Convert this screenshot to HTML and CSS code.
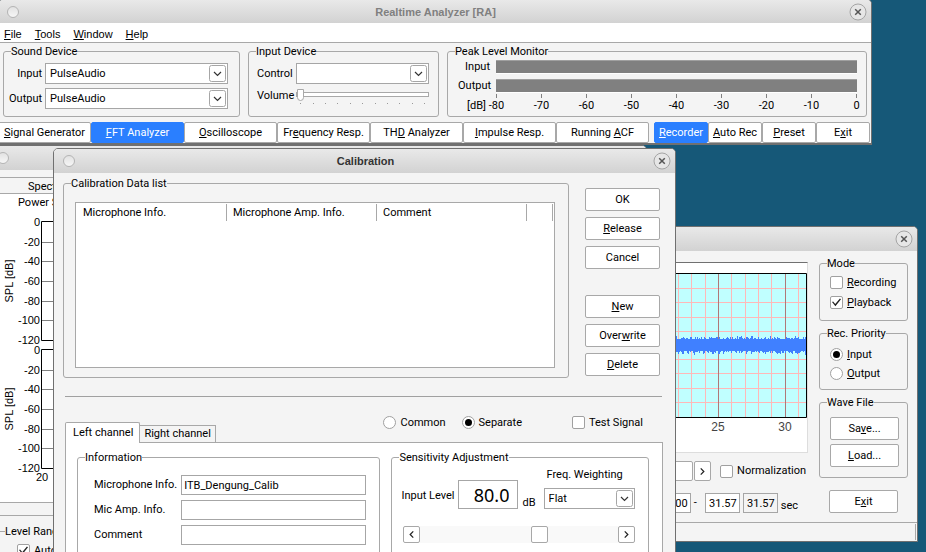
FILE: index.html
```html
<!DOCTYPE html>
<html lang="en">
<head>
<meta charset="utf-8">
<title>Realtime Analyzer</title>
<link rel="stylesheet" href="styles.css">
</head>
<body>
<svg class="icons">
  <symbol id="close" viewBox="0 0 18 18"><circle cx="9" cy="9" r="8" fill="#e6e6e6" stroke="#a4a4a4"/><path d="M6.200 6.200l5.600 5.600M11.800 6.200l-5.600 5.600" stroke="#555" stroke-width="1.500"/></symbol>
  <symbol id="down" viewBox="0 0 17 17"><rect x=".5" y=".5" width="16" height="16" rx="2" fill="#fff" stroke="#a6a6a6"/><path d="M5 7l3.500 3.500L12 7" fill="none" stroke="#333" stroke-width="1.200"/></symbol>
  <symbol id="left" viewBox="0 0 17 17"><path d="M10.500 5L7 8.500l3.500 3.500" fill="none" stroke="#222" stroke-width="1.400"/></symbol>
  <symbol id="right" viewBox="0 0 17 17"><path d="M6.500 5L10 8.500 6.500 12" fill="none" stroke="#222" stroke-width="1.400"/></symbol>
</svg>
<main class="desktop">

  <section class="window spectrum">
    <header class="titlebar"><span class="orb"></span></header>
    <div class="spectrum-tab">Spectrum</div>
    <div class="spectrum-view">
      <div class="spectrum-title">Power Spectrum</div>
      <svg class="spectrum-plot" width="120" height="280" viewBox="0 0 120 280">
        <g stroke="#808080"><path d="M51 32.500h60M51 51.500h60M51 71.500h60M51 91.500h60M51 110.500h60M51 160.500h60M51 179.500h60M51 199.500h60M51 219.500h60M51 238.500h60"/></g>
        <path d="M111 11.500H51.500v119H111M111 139.500H51.500v119H111" fill="none" stroke="#000"/>
        <g text-anchor="end">
          <text x="50" y="16">0</text><text x="50" y="36">-20</text><text x="50" y="55">-40</text><text x="50" y="75">-60</text><text x="50" y="95">-80</text><text x="50" y="114">-100</text><text x="50" y="134">-120</text>
          <text x="50" y="144">0</text><text x="50" y="164">-20</text><text x="50" y="183">-40</text><text x="50" y="203">-60</text><text x="50" y="223">-80</text><text x="50" y="242">-100</text><text x="50" y="262">-120</text>
        </g>
        <g text-anchor="middle">
          <text x="52" y="271">20</text>
          <text transform="translate(23 71) rotate(-90)">SPL [dB]</text>
          <text transform="translate(23 199) rotate(-90)">SPL [dB]</text>
        </g>
      </svg>
    </div>
    <div class="spectrum-foot">
      <fieldset><legend>Level Range</legend>
        <label class="option"><input type="checkbox" checked>Auto</label>
      </fieldset>
    </div>
  </section>

  <section class="window analyzer">
    <header class="titlebar inactive"><span class="orb"></span><h1>Realtime Analyzer [RA]</h1><button class="close" aria-label="Close"><svg><use href="#close"/></svg></button></header>
    <nav class="menu"><a href="#"><u>F</u>ile</a><a href="#"><u>T</u>ools</a><a href="#"><u>W</u>indow</a><a href="#"><u>H</u>elp</a></nav>
    <div class="devices">
      <fieldset class="sound"><legend>Sound Device</legend>
        <label for="snd-in">Input</label>
        <span class="select"><select id="snd-in"><option>PulseAudio</option></select><svg><use href="#down"/></svg></span>
        <label for="snd-out">Output</label>
        <span class="select"><select id="snd-out"><option>PulseAudio</option></select><svg><use href="#down"/></svg></span>
      </fieldset>
      <fieldset class="control"><legend>Input Device</legend>
        <label for="ctl">Control</label>
        <span class="select"><select id="ctl"><option></option></select><svg><use href="#down"/></svg></span>
        <label for="vol">Volume</label>
        <span class="volume"><input id="vol" type="range" value="0"><span class="dots"><i></i><i></i><i></i><i></i><i></i><i></i><i></i><i></i><i></i><i></i><i></i></span></span>
      </fieldset>
      <fieldset class="peak"><legend>Peak Level Monitor</legend>
        <span>Input</span><div class="bar"></div>
        <span>Output</span><div class="bar"></div>
        <span class="unit">[dB]</span>
        <div class="scale"><span>-80</span><span>-70</span><span>-60</span><span>-50</span><span>-40</span><span>-30</span><span>-20</span><span>-10</span><span>0</span></div>
      </fieldset>
    </div>
    <div class="toolbar">
      <div class="tools"><button><u>S</u>ignal Generator</button><button class="on"><u>F</u>FT Analyzer</button><button><u>O</u>scilloscope</button><button>Fr<u>e</u>quency Resp.</button><button>TH<u>D</u> Analyzer</button><button><u>I</u>mpulse Resp.</button><button>Running <u>A</u>CF</button></div>
      <div class="tools short"><button class="on"><u>R</u>ecorder</button><button><u>A</u>uto Rec</button><button><u>P</u>reset</button><button>E<u>x</u>it</button></div>
    </div>
  </section>

  <section class="window recorder">
    <header class="titlebar inactive"><span class="orb"></span><button class="close" aria-label="Close"><svg><use href="#close"/></svg></button></header>
    <div class="recorder-body">
      <div class="recorder-main">
        <div class="wave-panel">
          <svg width="297" height="189" viewBox="0 0 297 189">
            <rect x="20" y="10" width="276" height="145" fill="#c0ffff"/>
            <path d="M20 25.500h276M20 39.500h276M20 54.500h276M20 68.500h276M20 96.500h276M20 110.500h276M20 125.500h276M20 139.500h276M168.500 10v145M181.500 10v145M195.500 10v145M221.500 10v145M235.500 10v145M248.500 10v145M261.500 10v145M288.500 10v145" stroke="#ffb8b8" fill="none"/>
            <path d="M208.500 10v145M275.500 10v145" stroke="#b07878"/>
            <path id="wave" stroke="#4080ff" fill="none"/>
            <path d="M20 10.500h276.500v144H20" fill="none" stroke="#000"/>
            <g fill="#444" text-anchor="middle"><text x="208" y="168">25</text><text x="275" y="168">30</text></g>
          </svg>
        </div>
        <div class="seek">
          <button class="seek-thumb" aria-label="Position"></button><button class="step" aria-label="Next"><svg><use href="#right"/></svg></button>
          <label class="option"><input type="checkbox">Normalization</label>
        </div>
        <div class="range"><input aria-label="Start" value="0.00"><span>-</span><input aria-label="End" value="31.57"><input class="readonly" aria-label="Length" value="31.57" readonly><span class="sec">sec</span></div>
      </div>
      <div class="recorder-side">
        <fieldset class="mode"><legend>Mode</legend>
          <label class="option"><input type="checkbox"><span><u>R</u>ecording</span></label>
          <label class="option"><input type="checkbox" checked><span><u>P</u>layback</span></label>
        </fieldset>
        <fieldset class="priority"><legend>Rec. Priority</legend>
          <label class="option"><input type="radio" name="prio" checked><span><u>I</u>nput</span></label>
          <label class="option"><input type="radio" name="prio"><span><u>O</u>utput</span></label>
        </fieldset>
        <fieldset class="files"><legend>Wave File</legend>
          <button class="push">Sa<u>v</u>e...</button><button class="push"><u>L</u>oad...</button>
        </fieldset>
        <button class="push exit">E<u>x</u>it</button>
      </div>
    </div>
    <footer class="status"><span></span></footer>
  </section>

  <section class="window calibration">
    <header class="titlebar"><span class="orb"></span><h2>Calibration</h2><button class="close" aria-label="Close"><svg><use href="#close"/></svg></button></header>
    <div class="calibration-top">
      <fieldset class="data-list"><legend>Calibration Data list</legend>
        <div class="list"><table><thead><tr><th>Microphone Info.</th><th>Microphone Amp. Info.</th><th>Comment</th><th class="spare"></th></tr></thead></table></div>
      </fieldset>
      <div class="actions">
        <button class="push">OK</button><button class="push"><u>R</u>elease</button><button class="push">Cancel</button>
        <button class="push second"><u>N</u>ew</button><button class="push">Over<u>w</u>rite</button><button class="push"><u>D</u>elete</button>
      </div>
    </div>
    <hr>
    <div class="tab-row">
      <div class="tabs"><button class="tab current">Left channel</button><button class="tab">Right channel</button></div>
      <div class="modes">
        <label class="option"><input type="radio" name="chan">Common</label>
        <label class="option"><input type="radio" name="chan" checked>Separate</label>
        <label class="option test"><input type="checkbox">Test Signal</label>
      </div>
    </div>
    <div class="tab-panel">
      <fieldset class="info"><legend>Information</legend>
        <label for="mic">Microphone Info.</label><input id="mic" value="ITB_Dengung_Calib">
        <label for="amp">Mic Amp. Info.</label><input id="amp">
        <label for="com">Comment</label><input id="com">
      </fieldset>
      <fieldset class="sensitivity"><legend>Sensitivity Adjustment</legend>
        <div class="level">
          <label for="lvl">Input Level</label><input id="lvl" value="80.0"><span class="db">dB</span>
          <div class="weighting"><label for="fw">Freq. Weighting</label>
            <span class="select"><select id="fw"><option>Flat</option></select><svg><use href="#down"/></svg></span></div>
        </div>
        <div class="scroller"><button aria-label="Lower"><svg><use href="#left"/></svg></button><input type="range" min="0" max="1000" value="615" aria-label="Sensitivity"><button aria-label="Raise"><svg><use href="#right"/></svg></button></div>
      </fieldset>
    </div>
  </section>
</main>
<script src="wave.js"></script>
</body>
</html>
```
FILE: styles.css
```css
* { box-sizing: border-box; }
body { margin: 0; font: 11px/12px Roboto, "Liberation Sans", sans-serif; color: #000; }
button, input, select { font: inherit; color: inherit; margin: 0; padding: 0; border-radius: 0; }
u { text-underline-offset: 1px; }
svg text { font: 11px "Liberation Sans", sans-serif; }
.icons { display: none; }
.desktop { position: relative; height: 100vh; overflow: hidden; background: #165878; }

/* window frames */
.window { position: absolute; background: #f4f4f4; border: 1px solid #707070; border-radius: 5px 5px 0 0; overflow: hidden; }
.titlebar { display: flex; align-items: center; justify-content: space-between; height: 24px; padding: 0 4px 0 9px; background: linear-gradient(#e9e9e9, #d2d2d2); }
.titlebar h1, .titlebar h2 { margin: 0; padding-left: 3px; font: bold 11px/14px "Liberation Sans", sans-serif; color: #333; }
.titlebar.inactive h1 { color: #808080; }
.orb { width: 12px; height: 12px; border: 1px solid #b4b4b4; border-radius: 50%; background: linear-gradient(#e2e2e2, #f6f6f6); }
.close { width: 18px; height: 18px; border: 0; background: none; }
.close svg { display: block; width: 18px; height: 18px; }

/* shared controls */
fieldset { min-width: 0; margin: -1px 0 0; padding: 0 10px; border: 1px solid #a8a8a8; border-radius: 3px; }
legend { margin-left: -3px; padding: 2px 0 0; line-height: 12px; white-space: nowrap; }
.select { position: relative; display: block; }
.select select { display: block; width: 100%; height: 21px; padding: 0 22px 0 4px; border: 1px solid #a6a6a6; background: #fff; appearance: none; }
.select svg { position: absolute; top: 2px; right: 2px; width: 17px; height: 17px; pointer-events: none; }
.option { display: flex; align-items: center; gap: 4px; height: 13px; white-space: nowrap; }
.option input { flex: none; display: grid; place-items: center; width: 13px; height: 13px; border: 1px solid #a0a0a0; border-radius: 2px; background: #fff; appearance: none; }
.option input[type=radio] { border-radius: 50%; }
.option input[type=radio]:checked::after { content: ""; width: 7px; height: 7px; border-radius: 50%; background: #000; }
.option input[type=checkbox]:checked::after { content: ""; width: 9px; height: 9px; background: #222; clip-path: polygon(0 45%, 12% 38%, 36% 68%, 88% 5%, 100% 14%, 38% 92%); }
.push { width: 100%; height: 23px; border: 1px solid #a8a8a8; border-radius: 2px; background: #fff; }

/* main analyzer window */
.analyzer { left: -2px; top: -1px; width: 874px; border-bottom-width: 2px; }
.analyzer .titlebar { height: 23px; padding: 0 4px 0 8px; }
.menu { display: flex; gap: 13px; height: 20px; padding: 4px 5px 0; background: #fff; border-bottom: 1px solid #a8a8a8; font: 11px/14px "Liberation Sans", sans-serif; }
.menu a { color: inherit; text-decoration: none; }
.devices { display: flex; gap: 8px; padding: 2px 4px 5px; }
.devices fieldset { display: grid; align-content: start; align-items: center; }
.sound { flex: none; width: 237px; }
.devices .sound, .devices .control { grid-template-columns: auto 1fr; gap: 4px; padding: 5px 11px 7px 5px; }
.devices .sound { column-gap: 3px; }
.devices .sound label { text-align: right; }
.devices .sound legend, .devices .control legend { margin-left: 2px; }
.control { flex: none; width: 191px; }
.devices .control { column-gap: 2px; padding-right: 9px; padding-left: 8px; }
.devices .control legend { margin-left: -1px; }
.volume input { display: block; width: 100%; height: 12px; background: none; appearance: none; }
.volume input::-webkit-slider-runnable-track { height: 5px; border: 1px solid #a8a8a8; background: #fff; }
.volume input::-webkit-slider-thumb { appearance: none; width: 7px; height: 12px; margin-top: -4px; border-radius: 0 0 4px 4px; border: 1px solid #a8a8a8; background: #fff; }
.dots { display: flex; justify-content: space-between; padding: 3px 4px 0; }
.dots i { width: 1px; height: 1px; background: #999; }
.peak { flex: 1; }
.devices .peak { grid-template-columns: 32px 1fr; column-gap: 6px; row-gap: 5px; padding-top: 2px; padding-bottom: 0; padding-right: 9px; }
.peak > span { text-align: right; }
.peak legend { margin-left: -3px; }
.bar { height: 14px; background: #808080; border-top: 1px solid #a0a0a0; border-bottom: 1px solid #fff; }
.peak .unit { align-self: end; margin-right: 4px; }
.scale { display: flex; justify-content: space-between; margin-top: -4px; }
.scale span { display: flex; flex-direction: column; align-items: center; width: 1px; }
.scale span::before { content: ""; width: 1px; height: 4px; margin-bottom: 2px; background: #808080; }
.toolbar { display: flex; gap: 5px; padding-right: 1px; margin-left: -1px; }
.tools { display: flex; flex: 651; }
.tools.short { flex: 216; }
.tools button { flex: 1 1 0; min-width: 0; height: 21px; border: 1px solid #a8a8a8; border-radius: 2px; background: #fff; white-space: nowrap; }
.tools .on { background: #2a7fff; border-color: #2a7fff; color: #fff; }

/* spectrum window */
.spectrum { left: -11px; top: 145px; width: 658px; }
.spectrum .titlebar { padding-left: 7px; }
.spectrum-tab { height: 17px; margin-top: 7px; padding: 3px 38px; border-top: 1px solid #a8a8a8; border-bottom: 1px solid #a8a8a8; }
.spectrum-view { height: 309px; background: #fff; border-bottom: 1px solid #a8a8a8; }
.spectrum-title { padding: 3px 28px 0; height: 16px; }
.spectrum-plot { display: block; }
.spectrum-foot { margin-top: 12px; padding: 9px 4px; border-top: 1px solid #a8a8a8; }
.spectrum-foot fieldset { padding: 6px 22px 20px; }
.spectrum-foot legend { margin-left: -12px; }

/* recorder window */
.recorder { left: 499px; top: 226px; width: 419px; }
.recorder-body { display: flex; gap: 11px; padding: 6px 9px 9px; }
.recorder-main { flex: 1; min-width: 0; padding-top: 5px; }
.wave-panel { display: flex; justify-content: flex-end; height: 191px; border: 1px solid #ddd; border-top-color: #707070; background: #fff; }
.wave-panel svg { display: block; flex: none; }
.wave-panel text { font-size: 12px; }
.seek { display: flex; justify-content: flex-end; align-items: center; gap: 1px; margin-top: 8px; padding-right: 2px; }
.seek button { height: 20px; border: 1px solid #a8a8a8; border-radius: 2px; background: #fff; }
.seek-thumb { width: 40px; }
.step { width: 17px; }
.step svg { display: block; width: 15px; height: 17px; }
.seek .option { margin-left: 8px; }
.range { display: flex; justify-content: flex-end; align-items: center; gap: 3px; margin-top: 12px; padding-right: 10px; }
.range input { width: 35px; height: 20px; padding-right: 2px; border: 1px solid #a6a6a6; background: #fff; text-align: right; }
.range > span:not(.sec) { width: 8px; }
.range .readonly { background: #f4f4f4; }
.sec { padding-top: 5px; }
.recorder-side { flex: none; width: 89px; display: flex; flex-direction: column; }
.recorder-side fieldset { margin-bottom: 6px; }
.recorder-side .option + .option { margin-top: 7px; }
.mode { padding: 6px 10px 11px; }
.priority { padding: 8px 10px 9px; }
.recorder-side .priority .option + .option { margin-top: 6px; }
.files { display: grid; gap: 4px; padding: 8px 8px 10px 10px; }
.exit { align-self: center; width: 69px; margin-top: 6px; }
.status { display: flex; justify-content: flex-end; height: 19px; padding: 1px; border-top: 1px solid #a8a8a8; }
.status span { border-right: 1px solid #a8a8a8; }

/* calibration window */
.calibration { left: 53px; top: 148px; width: 623px; padding-bottom: 20px; }
.calibration-top { display: flex; gap: 16px; padding: 4px 15px 0 9px; }
.data-list { flex: 1; padding: 12px 13px 9px 11px; }
.data-list legend { margin-left: -4px; }
.list { height: 166px; padding: 1px; border: 1px solid #a8a8a8; background: #fff; }
.list table { width: 100%; table-layout: fixed; border-collapse: separate; border-spacing: 0; }
.list th { width: 150px; height: 17px; padding: 0 6px; border-right: 1px solid #a8a8a8; font-weight: normal; text-align: left; }
.list .spare { width: auto; }
.actions { display: flex; flex-direction: column; gap: 6px; width: 75px; padding-top: 11px; }
.second { margin-top: 20px; }
.calibration hr { margin: 18px 13px 0 11px; border: 0; border-top: 1px solid #a0a0a0; }
.tab-row { display: flex; justify-content: space-between; padding: 19px 32px 0 11px; }
.modes { display: flex; gap: 16px; }
.test { margin-left: 34px; }
.tabs { display: flex; align-items: flex-end; margin-top: 6px; }
.tab { height: 17px; padding: 0 4px; border: 1px solid #a8a8a8; border-width: 1px 1px 0 0; background: #f4f4f4; white-space: nowrap; }
.tab.current { position: relative; height: 21px; padding: 0 6px 0 7px; margin-bottom: -1px; border-left-width: 1px; border-radius: 2px 2px 0 0; background: #fff; }
.tab-panel { display: flex; gap: 11px; margin: 0 12px 0 11px; padding: 8px 13px 12px 11px; border: 1px solid #a8a8a8; background: #fff; }
.info { display: grid; grid-template-columns: auto 1fr; gap: 5px 4px; align-items: center; align-content: start; flex: 302; padding: 11px 13px 16px 16px; }
.info legend { margin-left: -9px; }
.info input { width: 100%; height: 20px; padding: 0 2px; border: 1px solid #a6a6a6; background: #fff; }
.sensitivity { flex: 259; padding: 5px 13px 16px 9px; }
.sensitivity legend { margin-left: -2px; }
.level { display: flex; align-items: flex-end; gap: 4px; }
.level > label { padding-bottom: 7px; white-space: nowrap; }
.level > input { width: 60px; height: 29px; padding-right: 8px; border: 1px solid #a6a6a6; background: #fff; font: 18px "Noto Sans", sans-serif; text-align: right; }
.weighting { flex: 1; margin-left: 4px; }
.weighting label { display: block; padding: 0 0 7px 3px; white-space: nowrap; }
.scroller { display: flex; margin-top: 17px; padding-left: 2px; }
.scroller button { flex: none; width: 17px; height: 17px; border: 1px solid #a8a8a8; border-radius: 2px; background: #fff; }
.scroller svg { display: block; width: 15px; height: 15px; }
.scroller input { flex: 1; min-width: 0; height: 17px; background: #f9f9f9; appearance: none; }
.scroller input::-webkit-slider-thumb { appearance: none; width: 17px; height: 17px; border: 1px solid #a8a8a8; border-radius: 2px; background: #fff; }
```
FILE: wave.js
```js
// Draws the recorded signal as one vertical stroke per pixel column.
let seed = 7;
const next = () => (seed = (seed * 16807) % 2147483647) / 2147483647;
let d = "";
for (let x = 20; x < 296; x++) {
  const top = 76 - Math.round(next() * next() * 4);
  const bottom = 88 + Math.round(next() * next() * 4);
  d += `M${x + 0.5} ${top}V${bottom}`;
}
document.getElementById("wave").setAttribute("d", d);
```
